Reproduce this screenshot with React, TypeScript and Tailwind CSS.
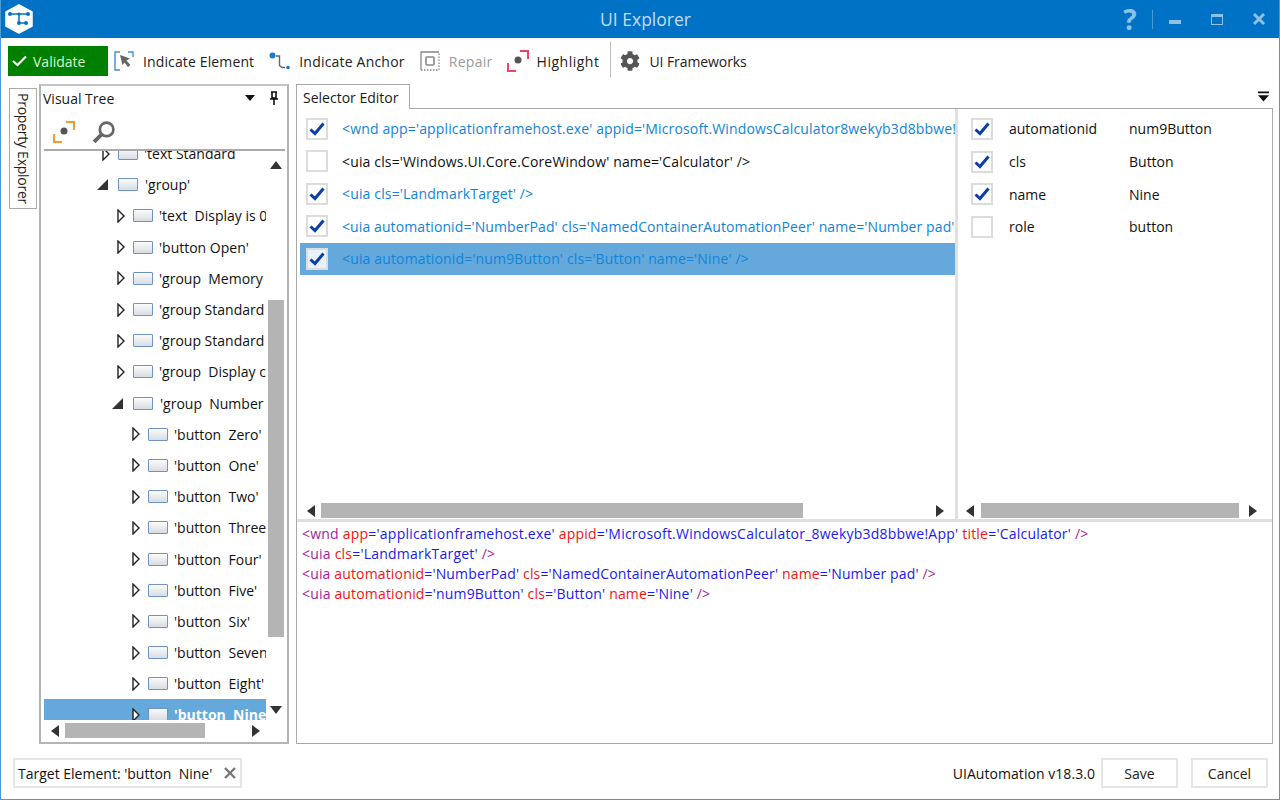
import React from "react";
import { FaCog } from "react-icons/fa";

const Arrow = ({ d, className = "" }: { d: "l" | "r" | "u" | "d"; className?: string }) => {
  const p = { l: "M8 0V12L0 6Z", r: "M0 0V12L8 6Z", u: "M0 8H12L6 0Z", d: "M0 0H12L6 8Z" }[d];
  const horizontal = d === "l" || d === "r";
  return (
    <svg width={horizontal ? 8 : 12} height={horizontal ? 12 : 8} viewBox={horizontal ? "0 0 8 12" : "0 0 12 8"} className={"shrink-0 " + className}>
      <path d={p} fill="#333333" />
    </svg>
  );
};

const Check = ({ on, selected = false }: { on: boolean; selected?: boolean }) => (
  <div className={"w-[22px] h-[22px] shrink-0 border-2 border-[#dcdcdc] flex items-center justify-center " + (selected ? "bg-[#e9f2fa]" : "bg-white")}>
    {on && (
      <svg width="16" height="14" viewBox="0 0 16 14">
        <path d="M1.5 7.5L6 11.5L14.5 1.5" fill="none" stroke="#0b3fa8" strokeWidth="3" />
      </svg>
    )}
  </div>
);

const Frame = ({ color, children }: { color: string; children?: React.ReactNode }) => (
  <svg width="22" height="22" viewBox="0 0 22 22" className="shrink-0">
    <path d="M1 13V21H9" fill="none" stroke={color} strokeWidth="2" />
    <path d="M13 1H21V9" fill="none" stroke={color} strokeWidth="2" />
    {children}
  </svg>
);

const Logo = () => (
  <svg width="28" height="30" viewBox="0 0 28 30" className="shrink-0">
    <path d="M14 1L27 8V22L14 29L1 22V8Z" fill="#ffffff" stroke="#ffffff" strokeWidth="1.5" strokeLinejoin="round" />
    <path d="M5 10H23M14 10V19M14 19H21" stroke="#0072c6" strokeWidth="1.5" fill="none" />
    <circle cx="5" cy="10" r="2" fill="#0072c6" />
    <circle cx="14" cy="10" r="1.5" fill="#0072c6" />
    <circle cx="23" cy="10" r="2" fill="#0072c6" />
    <circle cx="14" cy="19" r="2" fill="#0072c6" />
    <circle cx="21" cy="19" r="2" fill="#0072c6" />
  </svg>
);

const TreeRow = ({ indent, label, open, selected }: { indent: string; label: string; open?: boolean; selected?: boolean }) => (
  <div className={"h-[31.2px] flex items-center shrink-0 whitespace-pre overflow-hidden " + (selected ? "bg-[#65a9dc]" : "")}>
    <div className={"flex items-center shrink-0 " + indent}>
      {open ? (
        <svg width="11" height="11" viewBox="0 0 11 11" className="mr-[10px] shrink-0"><path d="M0 11H11V0Z" fill="#333333" /></svg>
      ) : (
        <svg width="8" height="14" viewBox="0 0 8 14" className="mr-[8px] ml-[3px] shrink-0"><path d="M1 1V13L7 7Z" fill="#ffffff" stroke="#222222" strokeWidth="1.4" /></svg>
      )}
      <div className={"w-[20px] h-[13px] rounded-[1px] border border-[#6d94c4] bg-[linear-gradient(#fbfbfb,#d8dde4)] shrink-0 " + (open ? "mr-[7px]" : "mr-[6px]")} />
      <span className={selected ? "font-bold text-white" : "text-[#111]"}>{label}</span>
    </div>
  </div>
);

const tree: [string, string, boolean?][] = [
  ["pl-[55px]", "'text Standard", false],
  ["pl-[53px]", "'group'", true],
  ["pl-[70px]", "'text  Display is 0'"],
  ["pl-[70px]", "'button Open'"],
  ["pl-[70px]", "'group  Memory"],
  ["pl-[70px]", "'group Standard"],
  ["pl-[70px]", "'group Standard"],
  ["pl-[70px]", "'group  Display c"],
  ["pl-[68px]", "'group  Number", true],
  ["pl-[85px]", "'button  Zero'"],
  ["pl-[85px]", "'button  One'"],
  ["pl-[85px]", "'button  Two'"],
  ["pl-[85px]", "'button  Three'"],
  ["pl-[85px]", "'button  Four'"],
  ["pl-[85px]", "'button  Five'"],
  ["pl-[85px]", "'button  Six'"],
  ["pl-[85px]", "'button  Seven'"],
  ["pl-[85px]", "'button  Eight'"],
];

const rows: [boolean, string, string][] = [
  [true, "<wnd app='applicationframehost.exe' appid='Microsoft.WindowsCalculator8wekyb3d8bbwe!App' title='Calculator' />", "text-[#1084d8] tracking-[0.15px]"],
  [false, "<uia cls='Windows.UI.Core.CoreWindow' name='Calculator' />", "text-[#111] tracking-[0.15px]"],
  [true, "<uia cls='LandmarkTarget' />", "text-[#1084d8] tracking-[0.15px]"],
  [true, "<uia automationid='NumberPad' cls='NamedContainerAutomationPeer' name='Number pad' />", "text-[#1084d8] tracking-[0.1px]"],
  [true, "<uia automationid='num9Button' cls='Button' name='Nine' />", "text-[#1084d8] tracking-[0.15px]"],
];

const attrs: [boolean, string, string][] = [
  [true, "automationid", "num9Button"],
  [true, "cls", "Button"],
  [true, "name", "Nine"],
  [false, "role", "button"],
];

const Tag = ({ children }: { children: React.ReactNode }) => <span className="text-[#a31f9a]">{children}</span>;
const K = ({ children }: { children: React.ReactNode }) => <span className="text-[#f01414]">{children}</span>;
const V = ({ children }: { children: React.ReactNode }) => <span className="text-[#1a1af0]">{children}</span>;
const Attr = ({ k, v }: { k: string; v: string }) => (
  <>
    {" "}
    <K>{k}</K>
    <V>='{v}'</V>
  </>
);

export default function App() {
  return (
    <div className="w-[1280px] h-[800px] flex flex-col overflow-hidden bg-white border-x border-b border-[#4a9ad8] text-[14px] font-['Open_Sans','Noto_Sans',sans-serif]">
      <div className="h-[38px] -mx-px shrink-0 bg-[#0072c6] flex items-center pl-[5px]">
        <Logo />
        <div className="flex-1 text-center text-[17.5px] text-[#c4dcf0] pl-[140px]">UI Explorer</div>
        <span className="text-[28px] leading-none font-bold text-[#8fc0e6] w-[24px] text-center mr-[10px]">?</span>
        <div className="w-px h-[19px] bg-[#4a9ad8] mr-[16px]" />
        <div className="w-[12px] h-[4px] mt-[6px] bg-[#8fc0e6] mr-[30px]" />
        <div className="w-[12px] h-[11px] border border-[#8fc0e6] border-t-[3px] mr-[29px]" />
        <svg width="14" height="14" viewBox="0 0 14 14" className="mr-[14px]">
          <path d="M2 2L12 12M12 2L2 12" stroke="#8fc0e6" strokeWidth="3" />
        </svg>
      </div>

      <div className="h-[46px] shrink-0 flex items-start pl-[7px] pt-[8px]">
        <div className="w-[100px] h-[30px] bg-[#008000] flex items-center pl-[4px] gap-[6px] text-[#d8f5d8]">
          <svg width="15" height="12" viewBox="0 0 15 12" className="shrink-0">
            <path d="M1 6L5.5 10L14 1.5" fill="none" stroke="#fff" strokeWidth="2.2" />
          </svg>
          Validate
        </div>
        <div className="h-[30px] flex items-center ml-[6px] text-[#222] tracking-[0.13px]">
          <svg width="20" height="20" viewBox="0 0 20 20" className="shrink-0 mr-[9px]">
            <path d="M6 1H1V19H6M14 1H19V6" fill="none" stroke="#3e8fd6" strokeWidth="1.4" />
            <path d="M6 4L16 7.5L12.5 9.5L16.5 14L14 16L10.5 11.5L8.5 14Z" fill="#666" />
          </svg>
          Indicate Element
        </div>
        <div className="h-[30px] flex items-center ml-[15px] text-[#222] tracking-[0.2px]">
          <svg width="21" height="18" viewBox="0 0 21 18" className="shrink-0 mr-[9px]">
            <circle cx="3.5" cy="3.5" r="3" fill="#1a78c8" />
            <path d="M7 4H10.5V13.5L13 15.5H16" fill="none" stroke="#666" strokeWidth="1.4" />
            <circle cx="19" cy="15.5" r="1.8" fill="#1a78c8" />
          </svg>
          Indicate Anchor
        </div>
        <div className="h-[30px] flex items-center ml-[15px] text-[#999] tracking-[0.3px]">
          <svg width="20" height="20" viewBox="0 0 20 20" className="shrink-0 mr-[9px]">
            <path d="M19 1H1V19" fill="none" stroke="#888" strokeWidth="1.3" />
            <path d="M1 19H19V1" fill="none" stroke="#888" strokeWidth="1.3" strokeDasharray="1.5 1.5" />
            <rect x="6" y="6" width="8" height="8" rx="1" fill="none" stroke="#888" strokeWidth="1.6" />
          </svg>
          Repair
        </div>
        <div className="h-[30px] flex items-center ml-[14px] text-[#222]">
          <Frame color="#ef4560"><circle cx="11" cy="10" r="3.5" fill="#555" /></Frame>
          <span className="ml-[8px] tracking-[0.5px]">Highlight</span>
        </div>
        <div className="w-px h-[35px] -mt-[4px] bg-[#bbb] ml-[11px] mr-[9px]" />
        <div className="h-[30px] flex items-center text-[#222] tracking-[-0.08px]">
          <FaCog size={20} color="#555" className="mr-[9px]" />
          UI Frameworks
        </div>
      </div>

      <div className="flex-1 min-h-0 flex pl-[8px] pr-[7px]">
        <div className="w-[28px] h-[121px] mt-[4px] shrink-0 border border-[#aaa] flex items-center justify-center">
          <span className="[writing-mode:vertical-rl] whitespace-nowrap tracking-[-0.25px] text-[#222]">Property Explorer</span>
        </div>
        <div className="w-[250px] h-[660px] ml-[2px] shrink-0 border-2 border-[#b4b4b4] border-t-[#c4c4c4] flex flex-col pl-[3px] pr-[2px]">
          <div className="h-[22px] shrink-0 flex items-center text-[#1a1a1a] pt-[2px]">
            <span className="flex-1 -ml-px">Visual Tree</span>
            <svg width="10" height="6" viewBox="0 0 10 6" className="mr-[14px]"><path d="M0 0H10L5 6Z" fill="#111" /></svg>
            <svg width="10" height="14" viewBox="0 0 10 14" className="mr-[6px]"><path d="M2 1H8M3 1V7H7V1M1 8H9M5 8V14" fill="none" stroke="#111" strokeWidth="1.6" /></svg>
          </div>
          <div className="h-[43px] pt-[6px] shrink-0 flex items-center pl-[9px] gap-[17px] border-b-[2px] border-[#aaa]">
            <Frame color="#f59a33"><circle cx="11" cy="10" r="3.5" fill="#555" /></Frame>
            <svg width="24" height="24" viewBox="0 0 23 23">
              <circle cx="14" cy="9" r="6.5" fill="none" stroke="#666" strokeWidth="2.6" />
              <path d="M9.5 13.5L2 21" stroke="#666" strokeWidth="3.6" />
            </svg>
          </div>
          <div className="h-[569px] shrink-0 flex">
            <div className="w-[222px] shrink-0 overflow-hidden flex flex-col">
              <div className="flex flex-col shrink-0 -mt-[13px]">
                {tree.map(([i, l, o], n) => (
                  <TreeRow key={n} indent={i} label={l} open={o} />
                ))}
                <TreeRow indent="pl-[85px]" label="'button  Nine'" selected />
              </div>
            </div>
            <div className="w-[17px] ml-[1px] shrink-0 flex flex-col items-center">
              <Arrow d="u" className="mt-[10px]" />
              <div className="w-[16px] h-[337px] mt-[131px] bg-[#b4b4b4]" />
              <Arrow d="d" className="mt-[69px]" />
            </div>
          </div>
          <div className="h-[15px] mt-[3px] shrink-0 flex items-center pl-[7px]">
            <Arrow d="l" />
            <div className="w-[140px] h-[15px] ml-[6px] bg-[#b4b4b4]" />
            <Arrow d="r" className="ml-[47px]" />
          </div>
        </div>

        <div className="w-[977px] ml-[7px] flex flex-col shrink-0 h-[660px]">
          <div className="h-[24px] flex items-stretch relative shrink-0">
            <div className="w-[114px] border border-b-0 border-[#aaa] bg-white px-[6px] flex items-center relative z-10 text-[#1a1a1a] h-[25px]">
              Selector Editor
            </div>
            <div className="flex-1" />
            <svg width="11" height="11" viewBox="0 0 12 11" className="mr-[4px] mt-[7px]"><path d="M0 0H12V2H0ZM0 4H12L6 11Z" fill="#111" /></svg>
          </div>
          <div className="flex-1 min-h-0 border border-[#aaa] flex flex-col">
            <div className="h-[413px] shrink-0 flex border-b-[3px] border-[#e0e0e0]">
              <div className="w-[658px] shrink-0 flex flex-col pl-[3px]">
                <div className="flex-1 min-h-0 pt-[3.5px] flex flex-col">
                  {rows.map(([on, text, color], i) => (
                    <div key={i} className={"h-[32.5px] shrink-0 flex items-center pl-[6px] overflow-hidden whitespace-nowrap " + (i === 4 ? "bg-[#65a9dc]" : "")}>
                      <Check on={on} selected={i === 4} />
                      <span className={"ml-[14px] " + color}>{text}</span>
                    </div>
                  ))}
                </div>
                <div className="h-[15px] mb-px shrink-0 flex items-center pl-[7px]">
                  <Arrow d="l" />
                  <div className="w-[482px] h-[15px] ml-[6px] bg-[#b4b4b4]" />
                  <Arrow d="r" className="ml-[133px]" />
                </div>
              </div>
              <div className="w-[3px] shrink-0 bg-[#e0e0e0]" />
              <div className="flex-1 min-w-0 flex flex-col">
                <div className="flex-1 min-h-0 pt-[3.5px] flex flex-col pl-[13px]">
                  {attrs.map(([on, k, v], i) => (
                    <div key={i} className="h-[32.7px] shrink-0 flex items-center text-[#111]">
                      <Check on={on} />
                      <span className="ml-[16px] w-[120px]">{k}</span>
                      <span>{v}</span>
                    </div>
                  ))}
                </div>
                <div className="h-[15px] mb-px shrink-0 flex items-center pl-[8px]">
                  <Arrow d="l" />
                  <div className="w-[258px] h-[15px] ml-[7px] bg-[#b4b4b4]" />
                  <Arrow d="r" className="ml-[10px]" />
                </div>
              </div>
            </div>
            <div className="pl-[5px] pt-[2px] leading-[20px] whitespace-nowrap">
              <div className="tracking-[0.22px]">
                <Tag>&lt;wnd</Tag><Attr k="app" v="applicationframehost.exe" /><Attr k="appid" v="Microsoft.WindowsCalculator_8wekyb3d8bbwe!App" /><Attr k="title" v="Calculator" /> <Tag>/&gt;</Tag>
              </div>
              <div className="tracking-[0.22px]">
                <Tag>&lt;uia</Tag><Attr k="cls" v="LandmarkTarget" /> <Tag>/&gt;</Tag>
              </div>
              <div className="tracking-[0.15px]">
                <Tag>&lt;uia</Tag><Attr k="automationid" v="NumberPad" /><Attr k="cls" v="NamedContainerAutomationPeer" /><Attr k="name" v="Number pad" /> <Tag>/&gt;</Tag>
              </div>
              <div className="tracking-[0.17px]">
                <Tag>&lt;uia</Tag><Attr k="automationid" v="num9Button" /><Attr k="cls" v="Button" /><Attr k="name" v="Nine" /> <Tag>/&gt;</Tag>
              </div>
            </div>
          </div>
        </div>
      </div>

      <div className="h-[55px] shrink-0 flex items-start pt-[14px] pl-[12px] pr-[11px]">
        <div className="w-[229px] h-[30px] border-2 border-[#e6e6e6] flex items-center pl-[3px] text-[#111] whitespace-pre">
          <span className="flex-1">Target Element: 'button  Nine'</span>
          <svg width="12" height="12" viewBox="0 0 12 12" className="mr-[4px]"><path d="M1 1L11 11M11 1L1 11" stroke="#777" strokeWidth="2.4" /></svg>
        </div>
        <div className="flex-1" />
        <span className="h-[30px] flex items-center text-[#111] tracking-[0.05px]">UIAutomation v18.3.0</span>
        <div className="w-[77px] h-[30px] ml-[6px] border-2 border-[#e6e6e6] flex items-center justify-center text-[#222]">Save</div>
        <div className="w-[77px] h-[30px] ml-[13px] border-2 border-[#e6e6e6] flex items-center justify-center text-[#222]">Cancel</div>
      </div>
    </div>
  );
}
